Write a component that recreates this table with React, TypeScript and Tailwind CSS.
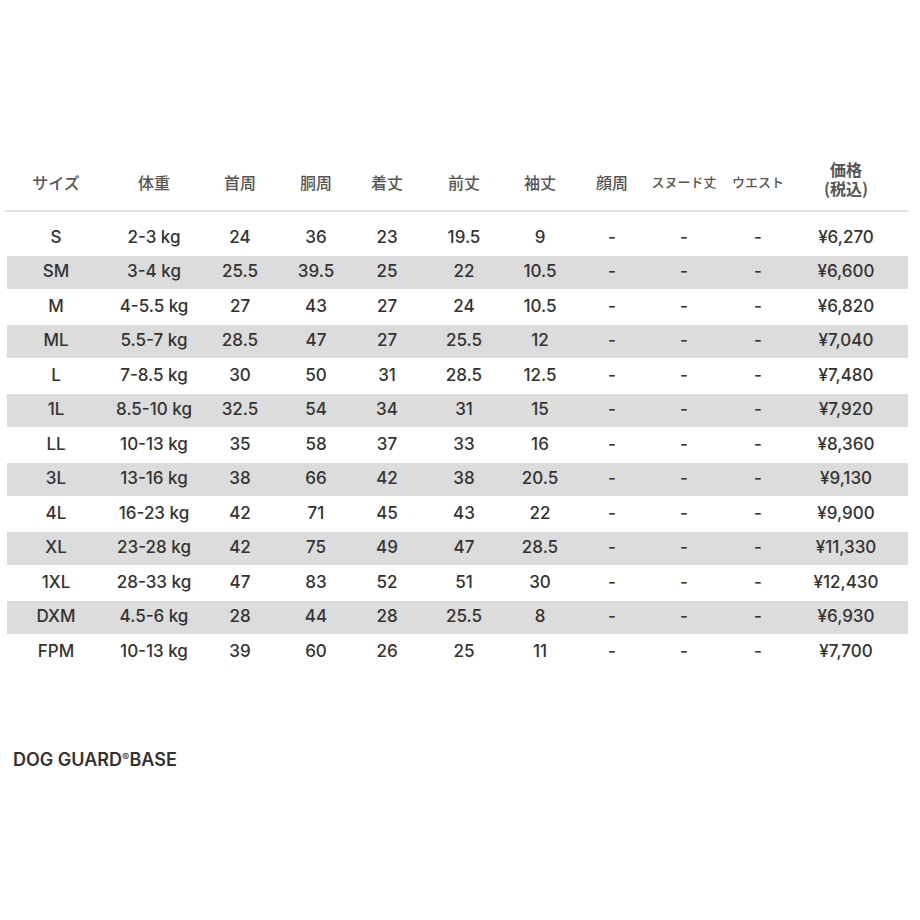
const headers = [
  { label: "サイズ", cls: "text-[16px]" },
  { label: "体重", cls: "text-[16px]" },
  { label: "首周", cls: "text-[16px]" },
  { label: "胴周", cls: "text-[16px]" },
  { label: "着丈", cls: "text-[16px]" },
  { label: "前丈", cls: "text-[16px]" },
  { label: "袖丈", cls: "text-[16px]" },
  { label: "顔周", cls: "text-[16px]" },
  { label: "スヌード丈", cls: "text-[13px]" },
  { label: "ウエスト", cls: "text-[13px]" },
];

const rows = [
  ["S", "2-3 kg", "24", "36", "23", "19.5", "9", "¥6,270"],
  ["SM", "3-4 kg", "25.5", "39.5", "25", "22", "10.5", "¥6,600"],
  ["M", "4-5.5 kg", "27", "43", "27", "24", "10.5", "¥6,820"],
  ["ML", "5.5-7 kg", "28.5", "47", "27", "25.5", "12", "¥7,040"],
  ["L", "7-8.5 kg", "30", "50", "31", "28.5", "12.5", "¥7,480"],
  ["1L", "8.5-10 kg", "32.5", "54", "34", "31", "15", "¥7,920"],
  ["LL", "10-13 kg", "35", "58", "37", "33", "16", "¥8,360"],
  ["3L", "13-16 kg", "38", "66", "42", "38", "20.5", "¥9,130"],
  ["4L", "16-23 kg", "42", "71", "45", "43", "22", "¥9,900"],
  ["XL", "23-28 kg", "42", "75", "49", "47", "28.5", "¥11,330"],
  ["1XL", "28-33 kg", "47", "83", "52", "51", "30", "¥12,430"],
  ["DXM", "4.5-6 kg", "28", "44", "28", "25.5", "8", "¥6,930"],
  ["FPM", "10-13 kg", "39", "60", "26", "25", "11", "¥7,700"],
];

const grid =
  "grid grid-cols-[98px_98px_74px_78px_64px_90px_62px_82px_62px_86px_90px]";

const Cell = ({ children }: { children: React.ReactNode }) => (
  <div className="flex justify-center items-center whitespace-nowrap">{children}</div>
);

const App = () => {
  return (
    <div className="w-[920px] h-[920px] bg-white pt-[160px] font-['Inter','Liberation_Sans',sans-serif] text-[#333]">
      <div className={`${grid} ml-[7px] h-[44px] font-['Noto_Sans_CJK_JP',sans-serif] font-medium text-[#555]`}>
        {headers.map((h) => (
          <div key={h.label} className={`flex justify-center items-center whitespace-nowrap ${h.cls}`}>
            {h.label}
          </div>
        ))}
        <div className="flex items-center justify-center text-center text-[16px] leading-[19px] font-bold mb-[6px]">
          <p>
            価格
            <br />
            (税込)
          </p>
        </div>
      </div>
      <div className="ml-[5px] w-[903px] h-[2px] bg-[#e2e2e2] mt-[6px]" />
      <div className="mt-[9px] ml-[7px] w-[901px]">
        {rows.map((r, i) => (
          <div key={r[0]} className="h-[34.5px]">
            <div
              className={`${grid} h-[33px] text-[17px] font-[550] ${
                i % 2 === 1 ? "bg-[#dcdcdc]" : ""
              }`}
            >
              {r.slice(0, 7).map((v, j) => (
                <Cell key={j}>{v}</Cell>
              ))}
              <Cell>-</Cell>
              <Cell>-</Cell>
              <Cell>-</Cell>
              <Cell>{r[7]}</Cell>
            </div>
          </div>
        ))}
      </div>
      <div className="mt-[76px] ml-[13px] text-[18px] leading-[22px] font-semibold text-[#333]">
        DOG GUARD<span className="text-[11px] align-[5px]">®</span>BASE
      </div>
    </div>
  );
};

export default App;
